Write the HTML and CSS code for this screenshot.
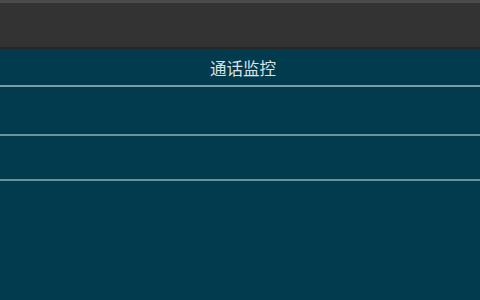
FILE: index.html
```html
<!DOCTYPE html>
<html>
<head>
<meta charset="utf-8">
<link rel="stylesheet" href="styles.css">
</head>
<body>
<div class="app">
  <div class="topbar"></div>
  <div class="panel">
    <div class="title">通话监控</div>
    <div class="row r1"></div>
    <div class="row r2"></div>
    <div class="rest"></div>
  </div>
</div>
</body>
</html>
```
FILE: styles.css
```css
html, body {
  margin: 0;
  padding: 0;
  width: 480px;
  height: 300px;
  overflow: hidden;
  background: #023a4e;
}
.app {
  display: flex;
  flex-direction: column;
  height: 300px;
}
.topbar {
  height: 44px;
  background: #333333;
  border-top: 3px solid #4a4a4a;
  border-bottom: 2px solid #262626;
}
.panel {
  flex: 1;
  display: flex;
  flex-direction: column;
  background: #023a4e;
}
.title {
  height: 38px;
  display: flex;
  align-items: center;
  justify-content: center;
  padding-left: 6px;
  box-sizing: border-box;
  font-family: "Noto Sans CJK SC", sans-serif;
  font-size: 16.5px;
  color: #d9e2e6;
  border-bottom: 2px solid #7a9fab;
  padding-top: 2px;
}
.row {
  border-bottom: 2px solid #6a93a0;
}
.r1 { height: 47px; }
.r2 { height: 43px; }
.rest { flex: 1; }
```
